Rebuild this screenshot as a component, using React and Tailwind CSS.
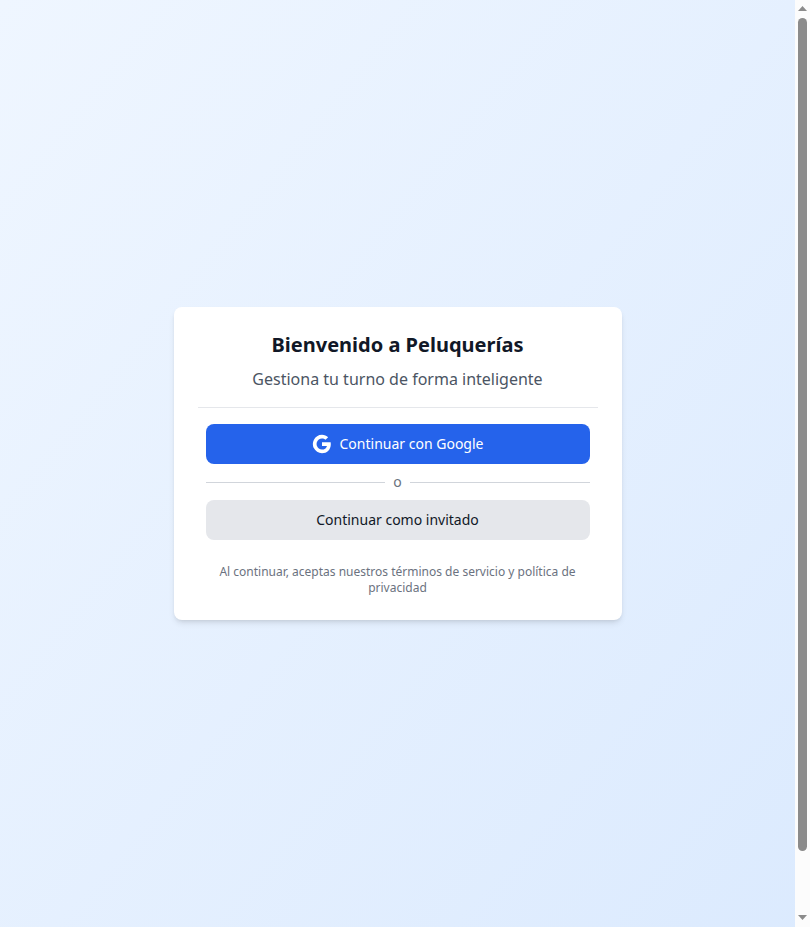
function GoogleIcon() {
  return (
    <svg className="h-5 w-5" viewBox="0 0 24 24" fill="currentColor" aria-hidden="true">
      <path d="M22.56 12.25c0-.78-.07-1.53-.2-2.25H12v4.26h5.92c-.26 1.37-1.04 2.53-2.21 3.31v2.77h3.57c2.08-1.92 3.28-4.74 3.28-8.09z" />
      <path d="M12 23c2.97 0 5.46-.98 7.28-2.66l-3.57-2.77c-.98.66-2.23 1.06-3.71 1.06-2.86 0-5.29-1.93-6.16-4.53H2.18v2.84C3.99 20.53 7.7 23 12 23z" />
      <path d="M5.84 14.09c-.22-.66-.35-1.36-.35-2.09s.13-1.43.35-2.09V7.07H2.18C1.43 8.55 1 10.22 1 12s.43 3.45 1.18 4.93l2.85-2.22.81-.62z" />
      <path d="M12 5.38c1.62 0 3.06.56 4.21 1.64l3.15-3.15C17.45 2.09 14.97 1 12 1 7.7 1 3.99 3.47 2.18 7.07l3.66 2.84c.87-2.6 3.3-4.53 6.16-4.53z" />
    </svg>
  );
}

function Scrollbar() {
  return (
    <div className="flex w-[15px] flex-col items-center bg-[#fcfcfc]" aria-hidden="true">
      <svg className="h-[18px] w-[15px] shrink-0" viewBox="0 0 15 18" fill="#8b8b8b">
        <path d="M7.5 6 L12 11 H3 Z" />
      </svg>
      <div className="h-[833px] w-[9px] shrink-0 rounded-full bg-[#8b8b8b]" />
      <svg className="mt-auto h-[18px] w-[15px] shrink-0" viewBox="0 0 15 18" fill="#8b8b8b">
        <path d="M7.5 11 L12 6 H3 Z" />
      </svg>
    </div>
  );
}

export default function App() {
  return (
    <div className="flex h-screen bg-white font-['Noto_Sans',sans-serif]">
      <main className="flex flex-1 items-center justify-center bg-linear-to-br/srgb from-[#eff6ff] to-[#dbeafe] bg-[length:100%_991px] bg-no-repeat">
        <div className="w-[448px] rounded-lg bg-white p-6 shadow-md">
          <header className="border-b border-[#e5e7eb] pb-4 text-center">
            <h1 className="text-xl font-bold text-[#111827]">Bienvenido a Peluquerías</h1>
            <p className="mt-2 text-base text-[#4b5563]">Gestiona tu turno de forma inteligente</p>
          </header>
          <div className="flex flex-col gap-2 px-2 pt-4">
            <button className="flex h-10 items-center justify-center gap-2 rounded-lg bg-[#2563eb] text-sm text-white">
              <GoogleIcon />
              Continuar con Google
            </button>
            <div className="flex items-center">
              <div className="flex-1 border-t border-[#d1d5db]" />
              <span className="px-2 text-sm text-[#6b7280]">o</span>
              <div className="flex-1 border-t border-[#d1d5db]" />
            </div>
            <button className="h-10 rounded-lg bg-[#e5e7eb] text-sm text-[#111827]">Continuar como invitado</button>
          </div>
          <p className="mt-6 px-2 text-center text-xs text-[#6b7280]">
            Al continuar, aceptas nuestros términos de servicio y política de privacidad
          </p>
        </div>
      </main>
      <Scrollbar />
    </div>
  );
}
